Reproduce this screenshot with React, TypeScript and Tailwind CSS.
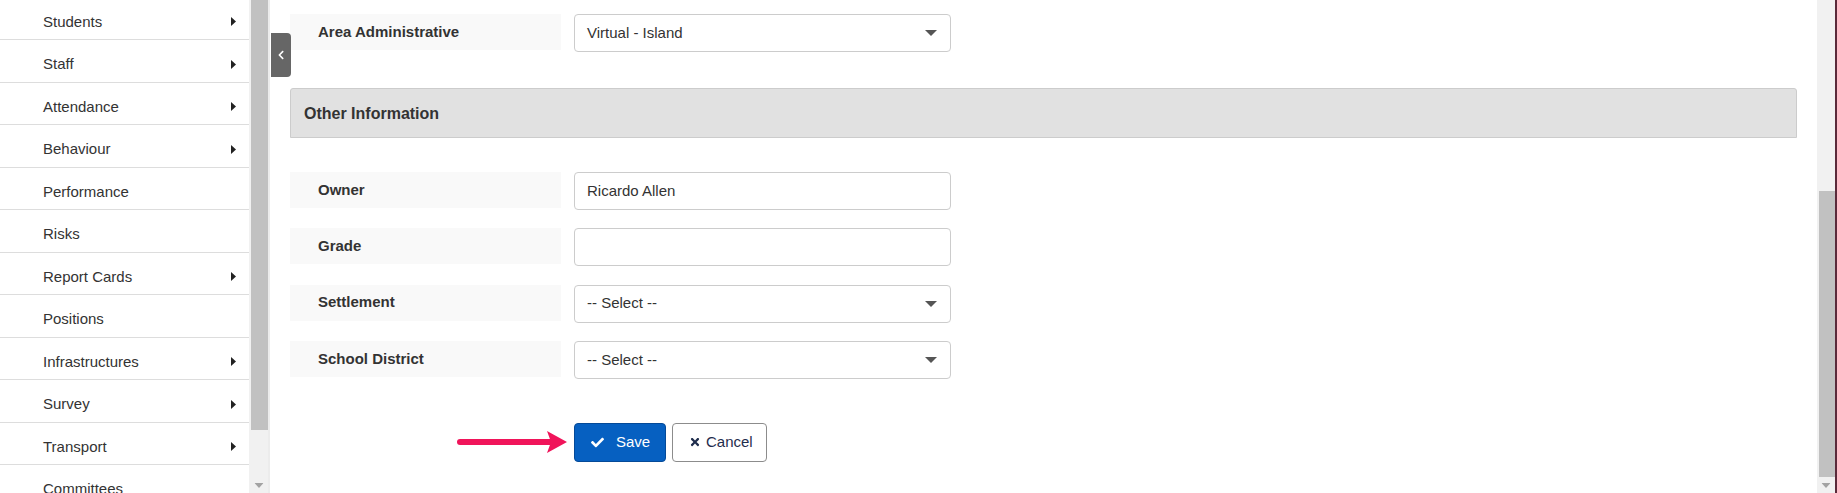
import { FaCheck, FaTimes, FaChevronLeft } from 'react-icons/fa';

const menu = [
  { label: 'Students', sub: true },
  { label: 'Staff', sub: true },
  { label: 'Attendance', sub: true },
  { label: 'Behaviour', sub: true },
  { label: 'Performance', sub: false },
  { label: 'Risks', sub: false },
  { label: 'Report Cards', sub: true },
  { label: 'Positions', sub: false },
  { label: 'Infrastructures', sub: true },
  { label: 'Survey', sub: true },
  { label: 'Transport', sub: true },
  { label: 'Committees', sub: false },
];

function Caret() {
  return (
    <svg width="5" height="9" viewBox="0 0 5 9" className="text-[#222]">
      <path d="M0 0 L5 4.5 L0 9 Z" fill="currentColor" />
    </svg>
  );
}

function SelectCaret() {
  return (
    <svg width="12" height="6" viewBox="0 0 12 6" className="text-[#555]">
      <path d="M0 0 H12 L6 6 Z" fill="currentColor" />
    </svg>
  );
}

function Field({ label, value, select }: { label: string; value?: string; select?: boolean }) {
  return (
    <div className="flex items-start gap-[13px]">
      <div className="flex h-[36px] w-[271px] items-center bg-[#f9f9f9] pl-[28px] text-[15px] font-bold text-[#333]">
        {label}
      </div>
      <div className="flex h-[38px] w-[377px] items-center justify-between rounded-[4px] border border-[#cccccc] bg-white pl-[12px] pr-[13px] text-[15px] text-[#333]">
        <span>{value}</span>
        {select && <SelectCaret />}
      </div>
    </div>
  );
}

function Scrollbar({ thumbTop, thumbHeight }: { thumbTop: number; thumbHeight: number }) {
  return (
    <div className="relative h-full w-full bg-[#f1f1f1]">
      <div
        className="absolute left-[2px] right-0 bg-[#c1c1c1]"
        style={{ top: thumbTop, height: thumbHeight }}
      />
      <svg
        width="9"
        height="5"
        viewBox="0 0 9 5"
        className="absolute bottom-[5px] left-1/2 -translate-x-1/2 text-[#a3a3a3]"
      >
        <path d="M0 0 H9 L4.5 5 Z" fill="currentColor" />
      </svg>
    </div>
  );
}

export default function App() {
  return (
    <div className="flex h-[493px] w-full overflow-hidden bg-white font-['Liberation_Sans',Arial,sans-serif]">
      {/* Sidebar */}
      <aside className="flex h-full w-[270px] shrink-0">
        <nav className="h-full w-[249px] overflow-hidden bg-white">
          <ul className="-mt-[2.5px]">
            {menu.map((m) => (
              <li
                key={m.label}
                className="flex h-[42.5px] items-center justify-between border-b border-[#dddddd] pl-[43px] pr-[13px] pt-[7px] text-[15px] text-[#333]"
              >
                <span>{m.label}</span>
                {m.sub && <Caret />}
              </li>
            ))}
          </ul>
        </nav>
        <div className="h-full w-[19px]">
          <Scrollbar thumbTop={0} thumbHeight={430} />
        </div>
        <div className="h-full w-[2px] bg-[#ececec]" />
      </aside>

      {/* Main */}
      <main className="relative h-full min-w-0 flex-1 px-5 pt-[14px]">
        <button className="absolute left-[1px] top-[33px] flex h-[44px] w-[20px] items-center justify-center rounded-r-[4px] bg-[#666666] text-white">
          <FaChevronLeft size={10} />
        </button>

        <Field label="Area Administrative" value="Virtual - Island" select />

        <div className="mt-[36px] flex h-[50px] items-center rounded-t-[3px] border border-[#cccccc] bg-[#e1e1e1] pl-[13px] pt-[1px] text-[16px] font-bold text-[#333]">
          Other Information
        </div>

        <div className="mt-[34px] flex flex-col gap-[18.3px]">
          <Field label="Owner" value="Ricardo Allen" />
          <Field label="Grade" value="" />
          <Field label="Settlement" value="-- Select --" select />
          <Field label="School District" value="-- Select --" select />
        </div>

        <div className="mt-[44px] flex items-center">
          <div className="flex w-[284px] justify-end pr-[6px]">
            <svg width="112" height="24" viewBox="0 0 112 24">
              <line x1="4" y1="12" x2="94" y2="12" stroke="#f0145a" strokeWidth="6" strokeLinecap="round" />
              <path d="M91 1 L111 12 L91 23 L95 12 Z" fill="#f0145a" />
            </svg>
          </div>
          <div className="flex items-center gap-[6px]">
            <button className="flex h-[39px] w-[92px] items-center gap-[12px] rounded-[4px] border border-[#054a98] bg-[#0660c1] pl-[16px] text-[15px] text-white">
              <FaCheck size={13} />
              <span>Save</span>
            </button>
            <button className="flex h-[39px] w-[95px] items-center gap-[5px] rounded-[4px] border border-[#8c8c8c] bg-white pl-[16px] text-[15px] text-[#1f2d4d]">
              <FaTimes size={12} />
              <span>Cancel</span>
            </button>
          </div>
        </div>
      </main>

      {/* Page scrollbar */}
      <div className="h-full w-[18px] shrink-0">
        <Scrollbar thumbTop={191} thumbHeight={286} />
      </div>
      <div className="h-full w-[2px] shrink-0 bg-[#5a2a3a]" />
    </div>
  );
}
